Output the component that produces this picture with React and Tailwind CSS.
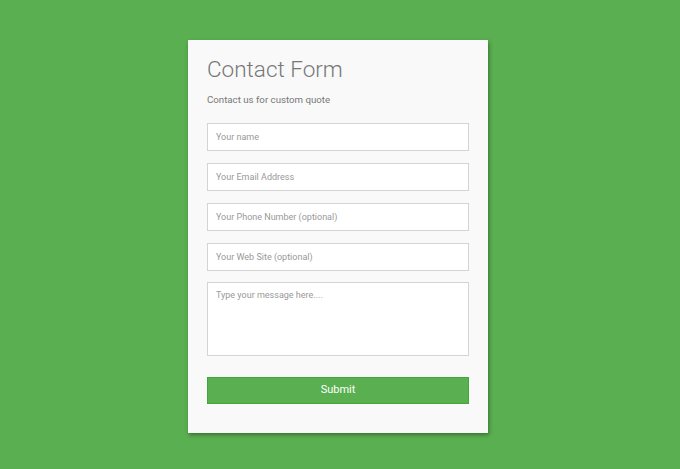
export default function App() {
  const font = { fontFamily: 'Roboto, "Liberation Sans", sans-serif' };
  return (
    <div className="w-[680px] h-[469px] bg-[#5aaf50] flex pl-[188px] pt-[40px]" style={font}>
      <div className="w-[300px] h-[393px] bg-[#f9f9f9] shadow-[1px_2px_4px_rgba(0,0,0,0.35)] px-[19px] pt-[16px]">
        <h1 className="text-[22.5px] leading-[27px] font-light text-[#777]">Contact Form</h1>
        <p className="mt-[9.5px] text-[9.7px] leading-[14px] text-[#777]">Contact us for custom quote</p>
        <div className="mt-[16px] flex flex-col">
          {["Your name", "Your Email Address", "Your Phone Number (optional)", "Your Web Site (optional)"].map((p, i) => (
            <input
              key={p}
              placeholder={p}
              className={(i > 0 ? "mt-[12px] " : "") + "h-[28px] w-full bg-white border border-[#d4d4d4] px-[8px] text-[9px] text-[#555] placeholder:text-[#999] outline-none"}
              style={font}
            />
          ))}
          <textarea
            placeholder="Type your message here...."
            className="mt-[11px] h-[74px] w-full bg-white border border-[#d4d4d4] px-[8px] py-[6px] text-[9px] text-[#555] placeholder:text-[#999] outline-none resize-none block"
            style={font}
          />
        </div>
        <button className="mt-[21px] h-[27px] w-full bg-[#5aaf50] border border-[#41a83a] text-white text-[11px] block" style={font}>
          Submit
        </button>
      </div>
    </div>
  );
}
